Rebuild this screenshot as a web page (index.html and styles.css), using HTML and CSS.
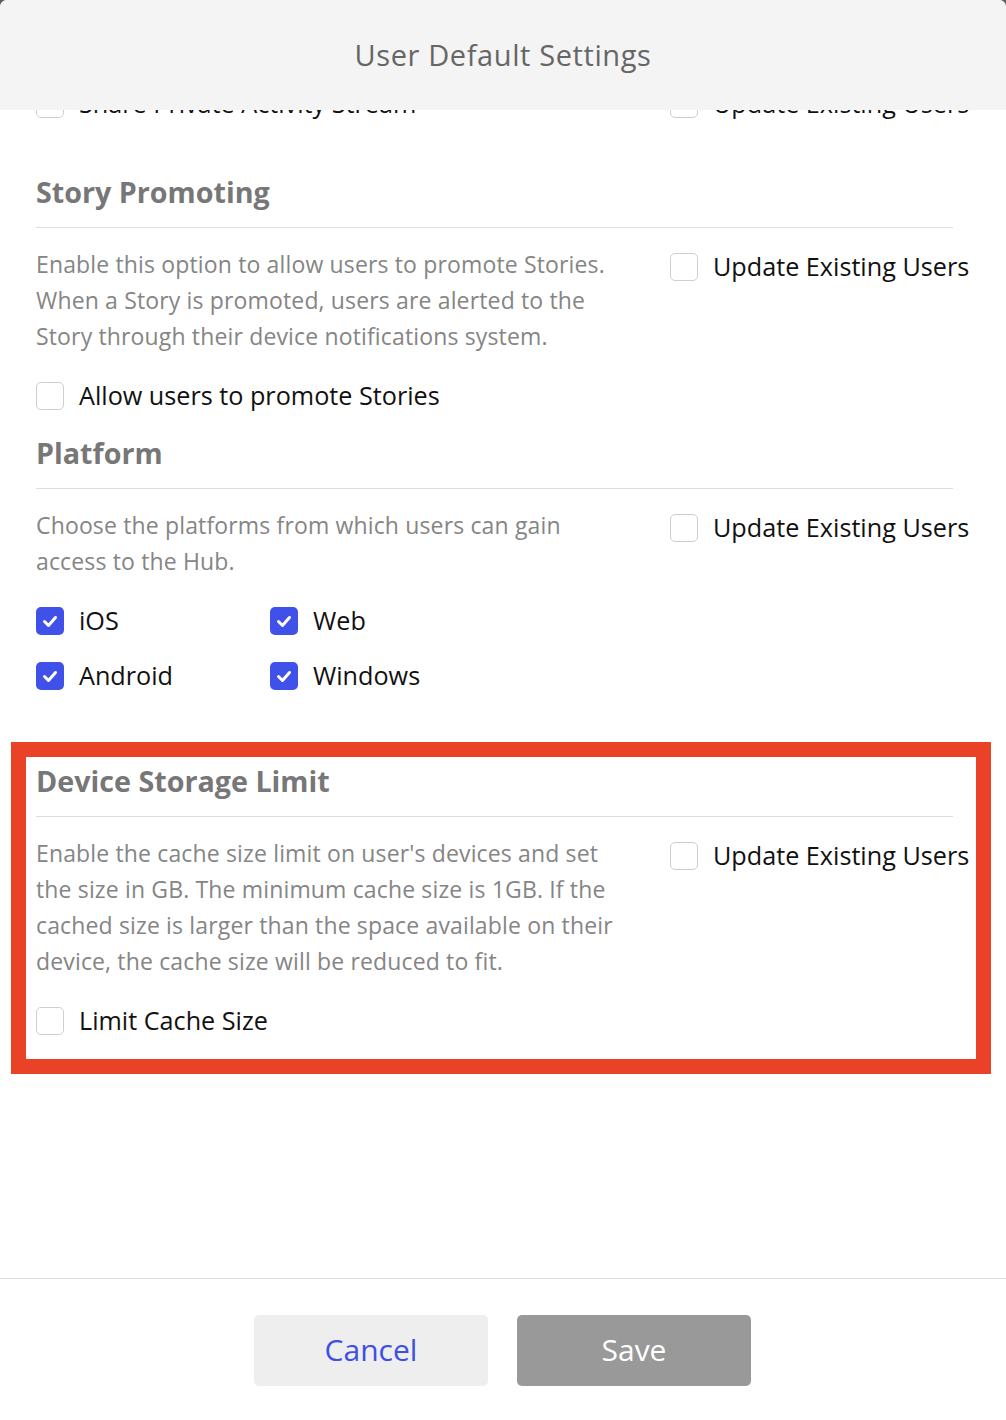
FILE: index.html
```html
<!DOCTYPE html>
<html lang="en">
<head>
<meta charset="utf-8">
<title>User Default Settings</title>
<link rel="stylesheet" href="styles.css">
</head>
<body>
<div class="modal">
  <header class="modal-header">
    <h1 class="modal-title">User Default Settings</h1>
  </header>
  <main class="modal-body">
    <div class="scroll">
      <div class="row clipped-row">
        <label class="check"><span class="box"></span><span class="label-text">Share Private Activity Stream</span></label>
        <label class="check"><span class="box"></span><span class="label-text">Update Existing Users</span></label>
      </div>

      <section class="section first">
        <h2 class="section-title">Story Promoting</h2>
        <hr class="divider">
        <div class="section-grid">
          <p class="desc">Enable this option to allow users to promote Stories. When a Story is promoted, users are alerted to the Story through their device notifications system.</p>
          <label class="check update"><span class="box"></span><span class="label-text">Update Existing Users</span></label>
        </div>
        <label class="check option"><span class="box"></span><span class="label-text">Allow users to promote Stories</span></label>
      </section>

      <section class="section platform">
        <h2 class="section-title">Platform</h2>
        <hr class="divider">
        <div class="section-grid">
          <p class="desc">Choose the platforms from which users can gain access to the Hub.</p>
          <label class="check update"><span class="box"></span><span class="label-text">Update Existing Users</span></label>
        </div>
        <div class="platform-grid">
          <label class="check"><span class="box checked"><svg viewBox="0 0 28 28" width="28" height="28"><polyline points="8.5,14.5 12.5,18.5 19.5,10.5" fill="none" stroke="#fff" stroke-width="3" stroke-linecap="round" stroke-linejoin="round"/></svg></span><span class="label-text">iOS</span></label>
          <label class="check"><span class="box checked"><svg viewBox="0 0 28 28" width="28" height="28"><polyline points="8.5,14.5 12.5,18.5 19.5,10.5" fill="none" stroke="#fff" stroke-width="3" stroke-linecap="round" stroke-linejoin="round"/></svg></span><span class="label-text">Web</span></label>
          <label class="check"><span class="box checked"><svg viewBox="0 0 28 28" width="28" height="28"><polyline points="8.5,14.5 12.5,18.5 19.5,10.5" fill="none" stroke="#fff" stroke-width="3" stroke-linecap="round" stroke-linejoin="round"/></svg></span><span class="label-text">Android</span></label>
          <label class="check"><span class="box checked"><svg viewBox="0 0 28 28" width="28" height="28"><polyline points="8.5,14.5 12.5,18.5 19.5,10.5" fill="none" stroke="#fff" stroke-width="3" stroke-linecap="round" stroke-linejoin="round"/></svg></span><span class="label-text">Windows</span></label>
        </div>
      </section>

      <section class="section highlighted">
        <h2 class="section-title">Device Storage Limit</h2>
        <hr class="divider">
        <div class="section-grid">
          <p class="desc">Enable the cache size limit on user's devices and set the size in GB. The minimum cache size is 1GB. If the cached size is larger than the space available on their device, the cache size will be reduced to fit.</p>
          <label class="check update"><span class="box"></span><span class="label-text">Update Existing Users</span></label>
        </div>
        <label class="check option"><span class="box"></span><span class="label-text">Limit Cache Size</span></label>
      </section>
    </div>
  </main>
  <footer class="modal-footer">
    <button class="btn btn-cancel" type="button">Cancel</button>
    <button class="btn btn-save" type="button">Save</button>
  </footer>
</div>
</body>
</html>
```
FILE: styles.css
```css
* { box-sizing: border-box; }

html, body {
  margin: 0;
  padding: 0;
}

body {
  background: #5f5f5f;
  font-family: "Open Sans", "Noto Sans", "Liberation Sans", sans-serif;
}

.modal {
  width: 1006px;
  height: 1420px;
  background: #ffffff;
  border-radius: 7px 7px 0 0;
  overflow: hidden;
  display: flex;
  flex-direction: column;
}

.modal-header {
  height: 110px;
  flex: 0 0 110px;
  background: #f4f4f4;
  display: flex;
  align-items: center;
  justify-content: center;
  padding-bottom: 2px;
  position: relative;
  z-index: 2;
}

.modal-title {
  margin: 0;
  font-size: 29px;
  font-weight: 400;
  color: #666666;
  letter-spacing: 0.6px;
}

.modal-body {
  flex: 1;
  overflow: hidden;
}

.scroll {
  padding: 0 30px 0 36px;
}

.row {
  display: flex;
  justify-content: space-between;
}

.clipped-row {
  margin-top: -20px;
  height: 28px;
}

.clipped-row .check:last-child {
  width: 306px;
}

.check {
  display: flex;
  align-items: center;
  gap: 15px;
  cursor: pointer;
}

.box {
  width: 28px;
  height: 28px;
  flex: 0 0 28px;
  border: 1px solid #cfcfcf;
  border-radius: 5px;
  background: #fff;
  display: block;
}

.box.checked {
  border: none;
  background: #3f51e8;
}

.box svg { display: block; }

.label-text {
  font-size: 25.2px;
  color: #111111;
  line-height: 28px;
  margin-top: -2px;
  white-space: nowrap;
}

.section-title {
  margin: 0;
  font-size: 28.7px;
  line-height: 36px;
  font-weight: 700;
  color: #777777;
}

.divider {
  border: none;
  border-top: 1px solid #dddddd;
  margin: 17px 23px 0 0;
}

.section-grid {
  display: grid;
  grid-template-columns: 634px auto;
  margin-top: 18px;
}

.desc {
  margin: 0;
  width: 595px;
  font-size: 23px;
  letter-spacing: 0.15px;
  line-height: 36px;
  color: #858585;
}

.update {
  align-self: start;
  margin-top: 7px;
}

.option {
  margin-top: 28px;
}

.section.first {
  margin-top: 56px;
}

.section.platform {
  margin-top: 25px;
}

.platform-grid {
  display: grid;
  grid-template-columns: 234px 234px;
  row-gap: 27px;
  margin-top: 28px;
}

.section.highlighted {
  margin: 52px -15px 0 -25px;
  border: 15px solid #e94227;
  padding: 6px 0 24px 10px;
}

.modal-footer {
  flex: 0 0 142px;
  border-top: 1px solid #dddddd;
  display: flex;
  justify-content: center;
  align-items: flex-start;
  gap: 29px;
  padding: 36px 1px 0 0;
}

.btn {
  width: 234px;
  height: 71px;
  border: none;
  border-radius: 5px;
  font-family: "Open Sans", "Noto Sans", "Liberation Sans", sans-serif;
  font-size: 30px;
  padding: 0 0 2px;
  cursor: pointer;
}

.btn-cancel {
  background: #eeeeee;
  color: #3d4fe6;
}

.btn-save {
  background: #999999;
  color: #ffffff;
}
```
